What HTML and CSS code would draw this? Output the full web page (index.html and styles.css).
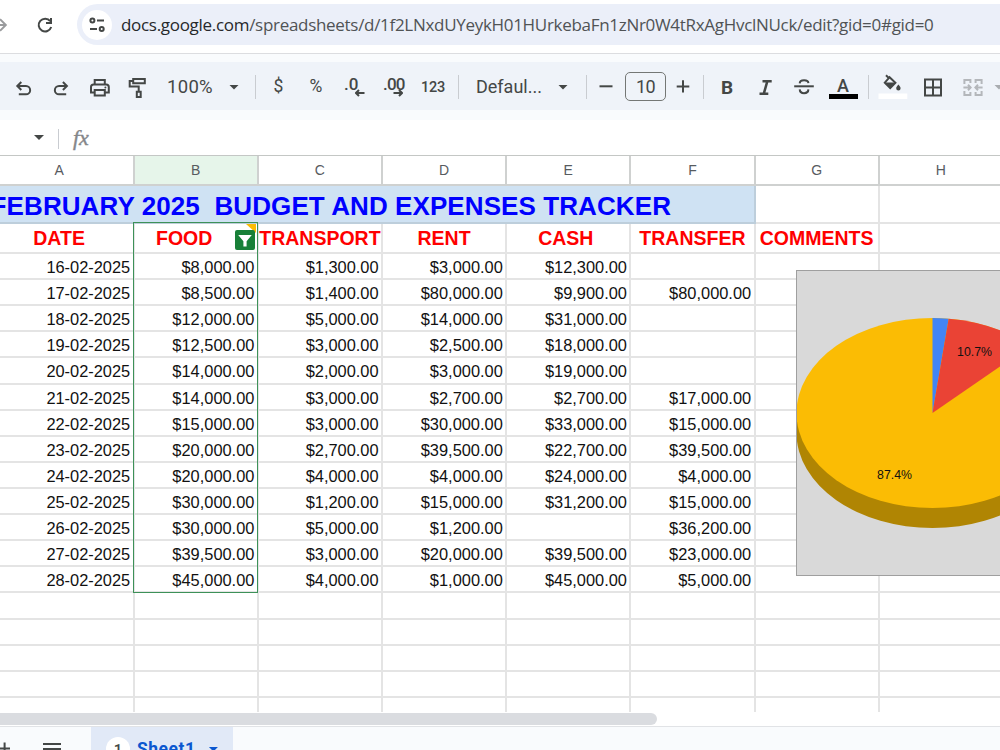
FILE: index.html
```html
<!DOCTYPE html>
<html lang="en">
<head>
<meta charset="utf-8" />
<title>February 2025 budget - Google Sheets</title>
<link rel="stylesheet" href="styles.css">
</head>
<body>
  <header class="browser">
    <svg class="forward" width="10" height="20" viewBox="0 0 10 20"><path d="M0 10H5.5M0 4.2L5.8 10L0 15.8" /></svg>
    <svg class="reload" width="20" height="20" viewBox="0 0 20 20">
      <path d="M15.2 6.2A6.4 6.4 0 1 0 16.2 12" />
      <path class="solid" d="M17 3V9H11V7H15V3Z" />
    </svg>
    <div class="address">
      <span class="siteinfo">
        <svg width="18" height="18" viewBox="0 0 18 18">
          <circle cx="4.4" cy="4.6" r="2" /><path d="M9 4.6H16M2 13H9" /><circle cx="13.7" cy="13" r="2" />
        </svg>
      </span>
      <span class="url"><b>docs.google.com</b>/spreadsheets/d/1f2LNxdUYeykH01HUrkebaFn1zNr0W4tRxAgHvclNUck/edit?gid=0#gid=0</span>
    </div>
  </header>

  <div class="toolbar">
    <span class="tool w38"><svg class="icon" viewBox="0 0 40 48"><path d="M18.3 20L14.3 24L18.3 28M14.8 24H23a4.1 4.1 0 0 1 0 8.3H15.8" /></svg></span>
    <span class="tool w38"><svg class="icon" viewBox="0 0 40 48"><path d="M21.9 20L25.9 24L21.9 28M25.4 24H18a4.1 4.1 0 0 0 0 8.3H25.2" /></svg></span>
    <span class="tool w38"><svg class="icon" viewBox="0 0 40 48"><path d="M15.7 22V18H25.8V22M15 30.5H12V25a2.6 2.6 0 0 1 2.6-2.6H27.2a2.6 2.6 0 0 1 2.6 2.6V30.5H26.5M15.7 28H25.8V33.4H15.7Z" /><circle class="solid" cx="26.4" cy="25.4" r="1" /></svg></span>
    <span class="tool w38"><svg class="icon" viewBox="0 0 40 48"><path d="M16.2 17H27.8V21.2H16.2ZM15.5 19H12.7V24.4H21.7V29M19.8 29.8H23.7V35H19.8Z" /></svg></span>
    <span class="tool zoomtext">100%</span>
    <span class="tool w32"><i class="caret"></i></span>
    <span class="tool w11"><i class="rule"></i></span>
    <span class="tool w35 symbol">$</span>
    <span class="tool w40 symbol">%</span>
    <span class="tool w38 decimals">.0<svg class="arrow" viewBox="0 0 10 8"><path d="M4 1L1 4L4 7M1 4H9.5" /></svg></span>
    <span class="tool w39 decimals more">.00<svg class="arrow" viewBox="0 0 10 8"><path d="M6 1L9 4L6 7M9 4H.5" /></svg></span>
    <span class="tool w40 formats">123</span>
    <span class="tool w10"><i class="rule"></i></span>
    <span class="tool fontname">Defaul...</span>
    <span class="tool w30"><i class="caret"></i></span>
    <span class="tool w16"><i class="rule"></i></span>
    <span class="tool w23"><svg class="icon" viewBox="0 0 40 48"><path d="M13.5 24.3H26.5" /></svg></span>
    <span class="size">10</span>
    <span class="tool w26"><svg class="icon" viewBox="0 0 40 48"><path d="M13.7 24.4H26.3M20 18.2V30.6" /></svg></span>
    <span class="tool w15"><i class="rule"></i></span>
    <span class="tool w32 bold">B</span>
    <span class="tool w44"><svg class="icon" viewBox="0 0 40 48"><path class="thick" d="M17.5 19.3H26.7M14.5 31.7H23.3M22.3 19.3L18.8 31.7" /></svg></span>
    <span class="tool w34"><svg class="icon" viewBox="0 0 40 48"><path d="M10.2 24.3H29.8" /><path d="M15.7 21.4C15.9 17.3 24.1 17.3 24.4 21.1M15.7 27.4C16 32.4 24.2 32.4 24.4 27.4" /></svg></span>
    <span class="tool w44 textcolor">A</span>
    <span class="tool w7"><i class="rule"></i></span>
    <span class="tool w40"><svg class="icon" viewBox="0 0 40 48"><path d="M14 13.3L16.8 16.1L12.8 20.7L18.2 26L23.4 20.7L16.8 14.5" /><path class="solid" d="M12.5 20.6H23.6L18.2 26.2ZM26.4 22.5C24.8 24.6 24.2 25.3 24.2 26.3a2.2 2.2 0 0 0 4.4 0C28.6 25.3 28 24.6 26.4 22.5Z" /><path class="swatch" d="M6.5 31.5H35.3V37H6.5Z" /></svg></span>
    <span class="tool w42"><svg class="icon" viewBox="0 0 40 48"><path d="M12 17.5H28V33.5H12ZM20 17.5V33.5M12 25.5H28" /></svg></span>
    <span class="tool w38"><svg class="icon faded" viewBox="0 0 40 48"><path d="M11.4 22V18H17.4V21M22.6 21V18H28.6V22M11.4 29V33H17.4V30M22.6 30V33H28.6V29M10.4 25.5H17M15 22.8L17.6 25.5L15 28.2M29.6 25.5H23M25 22.8L22.4 25.5L25 28.2" /></svg></span>
    <span class="tool w14"><i class="caret faded"></i></span>
  </div>

  <div class="formulabar"><i class="caret"></i><i class="rule"></i><span class="fx">fx</span></div>

  <main class="sheet">
    <div class="grid" id="grid"></div>
    <div class="filter">
      <i class="corner"></i>
      <svg class="funnel" viewBox="0 0 20 20"><path d="M3.2 5H16.8L11.6 11.3V16.5H8.4V11.3Z" /></svg>
    </div>
    <svg class="chart" width="274" height="306" viewBox="1 1 272 304">
      <path class="side" d="M.5 143V163A136 95 0 0 0 272.5 163V143Z" />
      <ellipse class="yellow" cx="136.5" cy="143" rx="136" ry="95" />
      <path class="blue" d="M136.5 143V48A136 95 0 0 1 152.7 48.7Z" />
      <path class="red" d="M136.5 143L152.7 48.7A136 95 0 0 1 233.3 76.2Z" />
      <text x="178.5" y="86.3">10.7%</text>
      <text x="98.5" y="209">87.4%</text>
    </svg>
  </main>

  <div class="scroll"><div class="thumb"></div></div>

  <footer class="tabs">
    <svg class="add" width="12" height="24" viewBox="0 0 12 24"><path d="M0 21.5H10M4.6 15.5V24" /></svg>
    <svg class="all" width="18" height="24" viewBox="0 0 18 24"><path d="M0 17H18M0 22H18" /></svg>
    <div class="tab"><span class="count">1</span><span class="name">Sheet1</span><i class="caret"></i></div>
  </footer>

  <script>
  (function () {
    "use strict";
    var grid  = document.getElementById("grid"),
        heads = ["DATE", "FOOD", "TRANSPORT", "RENT", "CASH", "TRANSFER", "COMMENTS", ""],
        rows  = [
          ["16-02-2025", "$8,000.00", "$1,300.00", "$3,000.00", "$12,300.00", ""],
          ["17-02-2025", "$8,500.00", "$1,400.00", "$80,000.00", "$9,900.00", "$80,000.00"],
          ["18-02-2025", "$12,000.00", "$5,000.00", "$14,000.00", "$31,000.00", ""],
          ["19-02-2025", "$12,500.00", "$3,000.00", "$2,500.00", "$18,000.00", ""],
          ["20-02-2025", "$14,000.00", "$2,000.00", "$3,000.00", "$19,000.00", ""],
          ["21-02-2025", "$14,000.00", "$3,000.00", "$2,700.00", "$2,700.00", "$17,000.00"],
          ["22-02-2025", "$15,000.00", "$3,000.00", "$30,000.00", "$33,000.00", "$15,000.00"],
          ["23-02-2025", "$20,000.00", "$2,700.00", "$39,500.00", "$22,700.00", "$39,500.00"],
          ["24-02-2025", "$20,000.00", "$4,000.00", "$4,000.00", "$24,000.00", "$4,000.00"],
          ["25-02-2025", "$30,000.00", "$1,200.00", "$15,000.00", "$31,200.00", "$15,000.00"],
          ["26-02-2025", "$30,000.00", "$5,000.00", "$1,200.00", "", "$36,200.00"],
          ["27-02-2025", "$39,500.00", "$3,000.00", "$20,000.00", "$39,500.00", "$23,000.00"],
          ["28-02-2025", "$45,000.00", "$4,000.00", "$1,000.00", "$45,000.00", "$5,000.00"],
          [], [], [], [], []
        ];

    function addCell(text, cls) {
        var cell = document.createElement("div");
        cell.className = cls;
        cell.textContent = text;
        grid.appendChild(cell);
    }

    "ABCDEFGH".split("").forEach(function (letter) {
        addCell(letter, letter === "B" ? "letter selected" : "letter");
    });

    addCell("FEBRUARY 2025  BUDGET AND EXPENSES TRACKER", "cell title");
    addCell("", "cell");
    addCell("", "cell");

    heads.forEach(function (text) {
        addCell(text, "cell head " + text.toLowerCase());
    });

    rows.forEach(function (row) {
        for ( var i = 0; i < 8; i += 1) {
            addCell(row[i] || "", "cell");
        }
    });
  }());
  </script>
</body>
</html>
```
FILE: styles.css
```css
* {
    box-sizing: border-box;
}

body {
    margin: 0;
    height: 750px;
    overflow: hidden;
    background: #fff;
    color: #444746;
    font-family: "Liberation Sans", Arial, sans-serif;
}

svg {
    display: block;
    flex: none;
    fill: none;
    stroke: #444746;
    stroke-width: 2;
}

.solid {
    fill: #444746;
    stroke: none;
}

.caret {
    width: 10px;
    height: 5px;
    background: #444746;
    clip-path: polygon(0 0, 100% 0, 50% 100%);
}

.rule {
    width: 1px;
    height: 24px;
    background: #c9ccd1;
}

/* browser bar */

.browser {
    display: flex;
    align-items: center;
    height: 54px;
    padding-bottom: 4px;
    border-bottom: 1px solid #dcdde0;
}

.forward {
    stroke: #9a9b9d;
}

.reload {
    margin-left: 25px;
}

.address {
    display: flex;
    align-items: center;
    flex: 1;
    height: 41px;
    margin-left: 22px;
    padding-left: 5px;
    border-radius: 21px 0 0 21px;
    background: #ebeff9;
}

.siteinfo {
    display: flex;
    align-items: center;
    justify-content: center;
    width: 30px;
    height: 30px;
    border-radius: 50%;
    background: #fff;
}

.url {
    margin-left: 9px;
    font: 17px/24px "Open Sans", "Noto Sans", sans-serif;
    letter-spacing: -.3px;
    color: #505355;
    white-space: nowrap;
}

.url b {
    font-weight: normal;
    color: #26282b;
}

/* toolbar */

.toolbar {
    display: flex;
    height: 66px;
    padding-left: 4px;
    border: solid #f9fbfd;
    border-width: 8px 0 10px;
    background: #eff3f9;
    font-family: Roboto, sans-serif;
    overflow: hidden;
}

.tool {
    display: flex;
    flex: none;
    align-items: center;
    justify-content: center;
    height: 50px;
}

.icon {
    width: 40px;
    height: 48px;
    margin-bottom: 2px;
}

.thick {
    stroke-width: 2.5;
}

.swatch {
    fill: #fff;
    stroke: none;
}

.icon.faded {
    stroke: #b4b7bb;
}

.caret.faded {
    background: #a9acb0;
}

.w7 { width: 7px; }
.w10 { width: 10px; }
.w11 { width: 11px; }
.w14 { width: 14px; }
.w15 { width: 15px; }
.w16 { width: 16px; }
.w23 { width: 23px; }
.w26 { width: 26px; }
.w30 { width: 30px; }
.w32 { width: 32px; }
.w34 { width: 34px; }
.w35 { width: 35px; }
.w38 { width: 38px; }
.w39 { width: 39px; }
.w40 { width: 40px; }
.w42 { width: 42px; }
.w44 { width: 44px; }

.zoomtext {
    width: 62px;
    padding-left: 11px;
    justify-content: flex-start;
    font-size: 18.5px;
    letter-spacing: .3px;
}

.symbol {
    font-size: 17.5px;
    padding-bottom: 2px;
}

.decimals {
    position: relative;
    justify-content: flex-start;
    padding: 0 0 7px 8px;
    font-size: 17px;
    font-weight: 500;
}

.decimals.more {
    padding-left: 9px;
    letter-spacing: -.8px;
}

.arrow {
    position: absolute;
    left: 19px;
    top: 27px;
    width: 10px;
    height: 8px;
}

.more .arrow {
    left: 19px;
}

.formats {
    font-size: 14.5px;
    font-weight: 500;
    letter-spacing: -.3px;
}

.fontname {
    width: 85px;
    padding: 0 0 2px 13px;
    justify-content: flex-start;
    font-size: 18px;
}

.size {
    flex: none;
    width: 41px;
    height: 29px;
    margin: 10px 4px 0 8px;
    border: 1px solid #747775;
    border-radius: 5px;
    font-size: 18px;
    line-height: 28px;
    letter-spacing: -.6px;
    text-align: center;
}

.bold {
    font-size: 19px;
    font-weight: 700;
}

.textcolor {
    padding-bottom: 4px;
    font-size: 18px;
    font-weight: 500;
    background: linear-gradient(#000, #000) 8px 32px / 29px 5px no-repeat;
}

/* formula bar */

.formulabar {
    display: flex;
    align-items: center;
    height: 35px;
    padding-left: 34px;
}

.formulabar .rule {
    height: 20px;
    margin: 2px 0 0 14px;
}

.fx {
    margin: 1px 0 0 14px;
    font: italic 22px/24px "Liberation Serif", serif;
    color: #85878a;
    -webkit-text-stroke: .4px #85878a;
}

/* sheet */

.sheet {
    position: relative;
    height: 557px;
    overflow: hidden;
    border-top: 1px solid #c4c7c5;
}

.grid {
    display: grid;
    grid-template-columns: 149px repeat(7, 124.2px);
    grid-template-rows: 30px 38px 30px;
    grid-auto-rows: 26.12px;
    width: 1019px;
    margin-left: -14.4px;
}

.letter {
    border: solid #cfd1d0;
    border-width: 0 2px 2px 0;
    font-size: 14px;
    line-height: 29px;
    text-align: center;
    color: #575b5f;
}

.selected {
    background: #e6f5ea;
}

.cell {
    padding-right: 2.4px;
    border: solid #e4e4e4;
    border-width: 0 2px 2px 0;
    font-size: 16.4px;
    line-height: 27px;
    text-align: right;
    color: #111;
    white-space: pre;
}

.title {
    grid-column: span 6;
    padding-left: 5px;
    border-color: #bdcedb;
    background: #cfe2f3;
    font-size: 26px;
    font-weight: bold;
    line-height: 41px;
    letter-spacing: .09px;
    text-align: left;
    color: #00f;
}

.head {
    padding: 0;
    font-size: 19.5px;
    font-weight: bold;
    line-height: 29px;
    text-align: center;
    color: #f00;
}

.food {
    padding-right: 23px;
}

.cash {
    padding-right: 5px;
}

/* border around the filtered column, with its button */
.filter {
    position: absolute;
    left: 133px;
    top: 66px;
    width: 125px;
    height: 371px;
    border: 1px solid #3d9158;
}

.corner {
    position: absolute;
    right: 1px;
    top: 1px;
    width: 10px;
    height: 9px;
    background: #fbbc04;
    clip-path: polygon(0 0, 100% 0, 100% 100%);
}

.funnel {
    position: absolute;
    left: 101px;
    top: 7px;
    width: 20px;
    height: 20px;
    border-radius: 2px;
    background: #188038;
    stroke: none;
    fill: #fff;
}

.chart {
    position: absolute;
    left: 796px;
    top: 114px;
    border: 1px solid #9f9f9f;
    background: #d9d9d9;
    stroke: none;
}

.chart text {
    font-size: 12.3px;
    text-anchor: middle;
    fill: #111;
}

.side { fill: #b08503; }
.yellow { fill: #fbbc04; }
.blue { fill: #4285f4; }
.red { fill: #ea4335; }

/* bottom of the window */

.scroll {
    height: 14px;
    padding-top: 1px;
}

.thumb {
    width: 657px;
    height: 12px;
    border-radius: 0 6px 6px 0;
    background: #dadce0;
}

.tabs {
    display: flex;
    height: 24px;
    border-top: 1px solid #e1e3e6;
    background: #f9fbfd;
    overflow: hidden;
}

.all {
    margin-left: 31px;
}

.tab {
    display: flex;
    align-items: center;
    width: 142px;
    height: 44px;
    margin-left: 30px;
    padding-left: 15px;
    background: #e1e9f7;
}

.count {
    width: 24px;
    height: 24px;
    border-radius: 50%;
    background: #fff;
    font: 500 15px/26px Roboto, sans-serif;
    text-align: center;
}

.name {
    margin: 0 13px 0 7px;
    font: 700 17.5px/24px Roboto, sans-serif;
    letter-spacing: .5px;
    color: #0b57d0;
}

.tab .caret {
    background: #0b57d0;
}
```
